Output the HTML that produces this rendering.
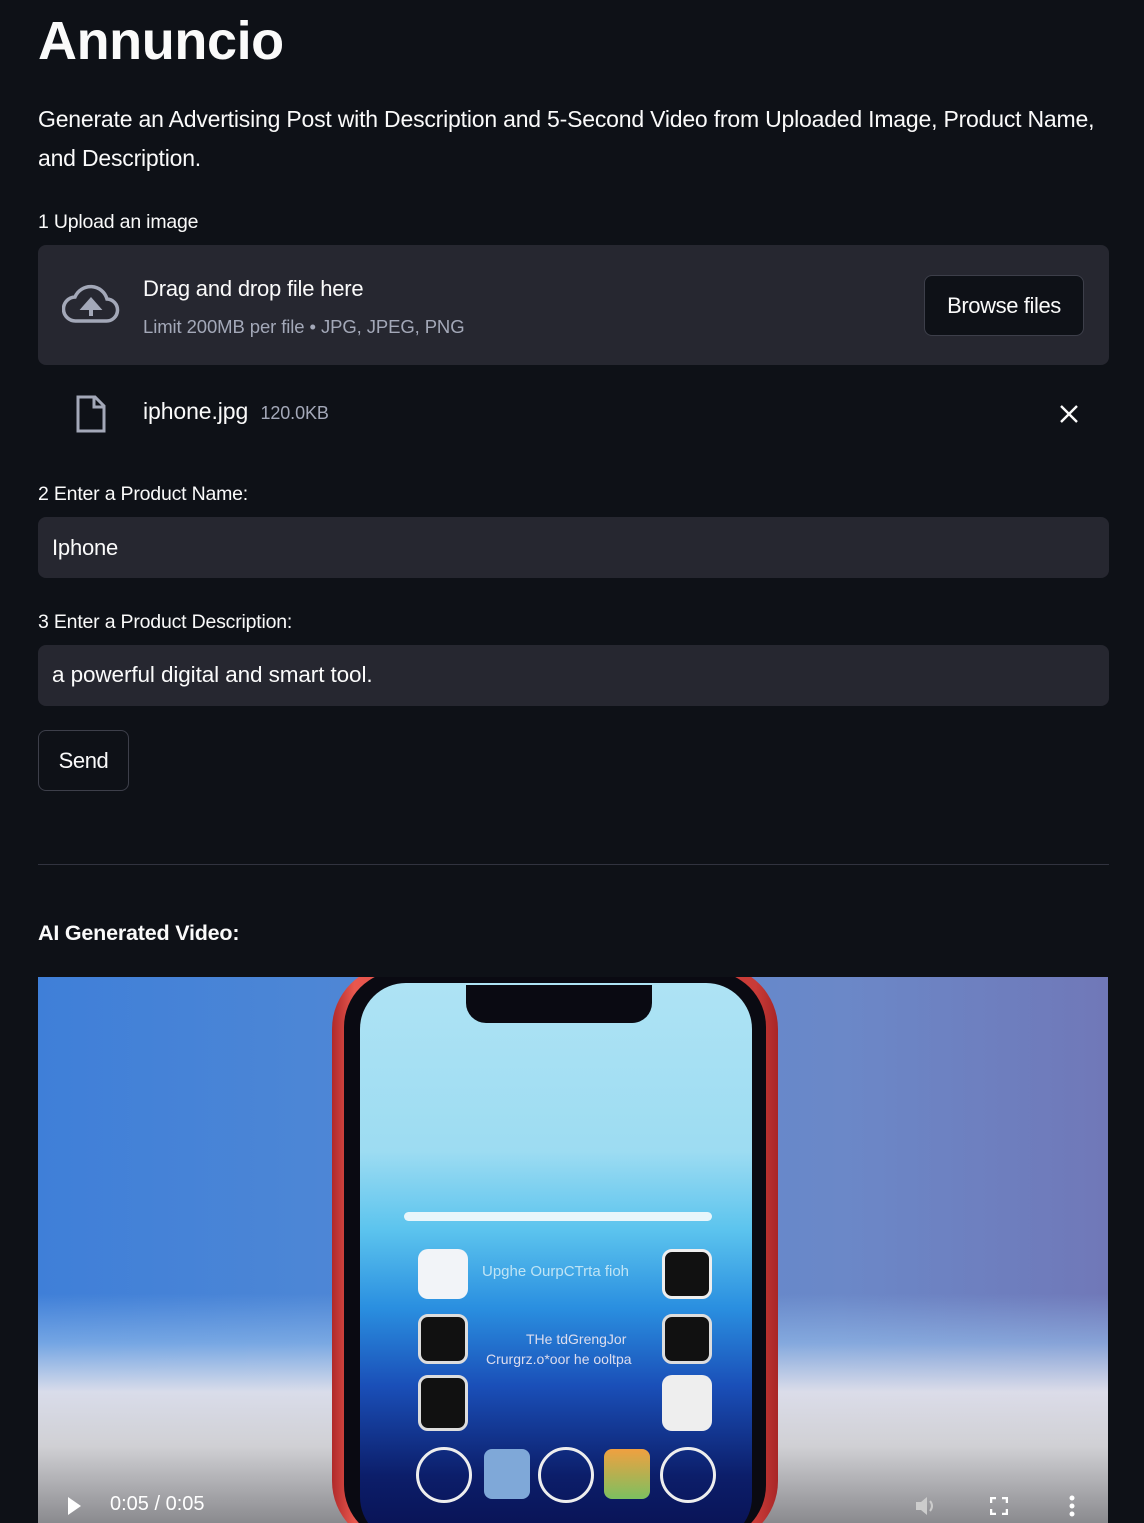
<!DOCTYPE html>
<html><head><meta charset="utf-8"><style>
*{margin:0;padding:0;box-sizing:border-box}
body{width:1144px;height:1523px;background:#0e1117;color:#fafafa;font-family:"Liberation Sans",sans-serif;position:relative;overflow:hidden}
.a{position:absolute;white-space:nowrap}
h1{position:absolute;left:38px;top:10px;font-size:54px;font-weight:700;letter-spacing:-0.4px}
.lbl{font-size:19.5px;letter-spacing:-0.2px}
.box{position:absolute;left:38px;width:1071px;background:#262730;border-radius:8px}
.btn{position:absolute;border:1px solid #3d3f4a;border-radius:8px;background:#0e1117;font-size:22px;display:flex;align-items:center;justify-content:center;letter-spacing:-0.4px}
</style></head><body>
<h1>Annuncio</h1>
<div class="a" style="left:38px;top:100px;font-size:23px;letter-spacing:-0.2px;line-height:39px">Generate an Advertising Post with Description and 5-Second Video from Uploaded Image, Product Name,<br>and Description.</div>
<div class="a lbl" style="left:38px;top:211px">1 Upload an image</div>
<div class="box" style="top:245px;height:120px"></div>
<svg class="a" style="left:62px;top:284px" width="58" height="40" viewBox="0 0 58 40"><path d="M14 37 H44 A11 11 0 0 0 45 15 A17 17 0 0 0 13 13 A12 12 0 0 0 14 37Z" fill="none" stroke="#a3a8b8" stroke-width="3.5"/><path d="M29 32 V21 M22 24 L29 16 L36 24Z" stroke="#a3a8b8" stroke-width="4" fill="#a3a8b8"/></svg>
<div class="a" style="left:143px;top:276px;font-size:22px;letter-spacing:-0.2px">Drag and drop file here</div>
<div class="a" style="left:143px;top:316px;font-size:18.5px;color:#a3a8b8;letter-spacing:-0.1px">Limit 200MB per file • JPG, JPEG, PNG</div>
<div class="btn" style="left:924px;top:275px;width:160px;height:61px">Browse files</div>
<svg class="a" style="left:76px;top:395px" width="30" height="38" viewBox="0 0 30 38"><path d="M2 2 H19 L28 11 V36 H2Z" fill="none" stroke="#a3a8b8" stroke-width="3"/><path d="M18 2 V12 H28" fill="none" stroke="#a3a8b8" stroke-width="3"/></svg>
<div class="a" style="left:143px;top:398px;font-size:23px;letter-spacing:-0.1px">iphone.jpg <span style="font-size:18px;color:#a3a8b8;margin-left:6px">120.0KB</span></div>
<svg class="a" style="left:1060px;top:405px" width="18" height="18"><path d="M1 1 L17 17 M17 1 L1 17" stroke="#fafafa" stroke-width="2.4"/></svg>
<div class="a lbl" style="left:38px;top:483px">2 Enter a Product Name:</div>
<div class="box" style="top:517px;height:61px"></div>
<div class="a" style="left:52px;top:535px;font-size:22px;letter-spacing:-0.2px">Iphone</div>
<div class="a lbl" style="left:38px;top:611px">3 Enter a Product Description:</div>
<div class="box" style="top:645px;height:61px"></div>
<div class="a" style="left:52px;top:662px;font-size:22.5px;letter-spacing:-0.1px">a powerful digital and smart tool.</div>
<div class="btn" style="left:38px;top:730px;width:91px;height:61px">Send</div>
<div class="a" style="left:38px;top:864px;width:1071px;height:1px;background:#31333f"></div>
<div class="a" style="left:38px;top:921px;font-size:21.5px;font-weight:700;letter-spacing:-0.2px">AI Generated Video:</div>
<div class="a" style="left:38px;top:977px;width:1070px;height:546px;overflow:hidden;background:linear-gradient(90deg,#3f7fd8 0%,#4c86d6 25%,#6b88c8 75%,#7078b8 100%)">
 <div class="a" style="left:0;top:0;width:1070px;height:546px;background:linear-gradient(180deg,rgba(0,0,0,0) 0%,rgba(0,0,0,0) 58%,rgba(150,190,235,.6) 67%,rgba(225,225,235,.95) 76%,#d0d0d4 86%,#8a8a8e 100%)"></div>
 <div class="a" style="left:294px;top:-12px;width:446px;height:580px;border-radius:64px;background:linear-gradient(90deg,#b02a2a,#e8574e 5%,#c93b38 95%,#a82626);"></div>
 <div class="a" style="left:306px;top:-6px;width:422px;height:570px;border-radius:56px;background:#0a0a12"></div>
 <div class="a" style="left:322px;top:6px;width:392px;height:560px;border-radius:46px;background:linear-gradient(180deg,#aee3f4 0%,#9ddcf2 30%,#5cc4ee 44%,#2a8fe0 58%,#1a4fb8 72%,#0c1e6a 88%,#081050 100%)"></div>
 <div class="a" style="left:428px;top:8px;width:186px;height:38px;border-radius:0 0 20px 20px;background:#0a0a12"></div>
 <div class="a" style="left:366px;top:235px;width:308px;height:9px;border-radius:5px;background:#e8f6fb"></div>
 <div class="a" style="left:380px;top:272px;width:50px;height:50px;border-radius:10px;background:#f2f4f8"></div>
 <div class="a" style="left:624px;top:272px;width:50px;height:50px;border-radius:10px;background:#111;border:3px solid #eee"></div>
 <div class="a" style="left:380px;top:337px;width:50px;height:50px;border-radius:10px;background:#111;border:3px solid #ddd"></div>
 <div class="a" style="left:624px;top:337px;width:50px;height:50px;border-radius:10px;background:#111;border:3px solid #ddd"></div>
 <div class="a" style="left:380px;top:398px;width:50px;height:56px;border-radius:10px;background:#111;border:3px solid #ddd"></div>
 <div class="a" style="left:624px;top:398px;width:50px;height:56px;border-radius:10px;background:#eee"></div>
 <div class="a" style="left:444px;top:286px;font-size:15px;color:#bfe4f5">Upghe OurpCTrta fioh</div>
 <div class="a" style="left:488px;top:354px;font-size:14px;color:#dde">THe tdGrengJor</div>
 <div class="a" style="left:448px;top:374px;font-size:14px;color:#dde">Crurgrz.o*oor he ooltpa</div>
 <div class="a" style="left:378px;top:470px;width:56px;height:56px;border-radius:50%;border:3px solid #eee"></div>
 <div class="a" style="left:446px;top:472px;width:46px;height:50px;border-radius:8px;background:#7fa8d8"></div>
 <div class="a" style="left:500px;top:470px;width:56px;height:56px;border-radius:50%;border:3px solid #eee"></div>
 <div class="a" style="left:566px;top:472px;width:46px;height:50px;border-radius:8px;background:linear-gradient(#f0a040,#7cc060)"></div>
 <div class="a" style="left:622px;top:470px;width:56px;height:56px;border-radius:50%;border:3px solid #eee"></div>
 <svg class="a" style="left:28px;top:518px" width="16" height="22"><path d="M2 2 L15 11 L2 20Z" fill="#fff"/></svg>
 <div class="a" style="left:72px;top:516px;font-size:20px;color:#fff">0:05 / 0:05</div>
 <svg class="a" style="left:876px;top:518px" width="24" height="22"><path d="M2 7 H7 L13 2 V20 L7 15 H2Z" fill="#ccc"/><path d="M16 6 Q20 11 16 16" stroke="#ccc" stroke-width="2" fill="none"/></svg>
 <svg class="a" style="left:952px;top:520px" width="18" height="18"><path d="M1 6 V1 H6 M12 1 H17 V6 M17 12 V17 H12 M6 17 H1 V12" stroke="#fff" stroke-width="2.5" fill="none"/></svg>
 <svg class="a" style="left:1030px;top:518px" width="8" height="24"><circle cx="4" cy="3" r="2.5" fill="#fff"/><circle cx="4" cy="11" r="2.5" fill="#fff"/><circle cx="4" cy="19" r="2.5" fill="#fff"/></svg>
</div>
</body></html>
